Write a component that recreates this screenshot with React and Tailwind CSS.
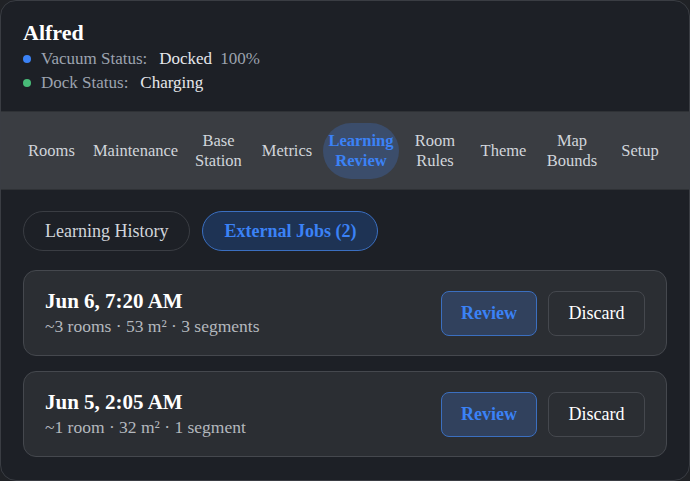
import React, { useState } from "react";

const navItems = [
  { label: ["Rooms"] },
  { label: ["Maintenance"] },
  { label: ["Base", "Station"] },
  { label: ["Metrics"] },
  { label: ["Learning", "Review"], active: true },
  { label: ["Room", "Rules"] },
  { label: ["Theme"] },
  { label: ["Map", "Bounds"] },
  { label: ["Setup"] },
];

const jobs = [
  { id: 1, when: "Jun 6, 7:20 AM", meta: "~3 rooms · 53 m² · 3 segments" },
  { id: 2, when: "Jun 5, 2:05 AM", meta: "~1 room · 32 m² · 1 segment" },
];

const App = () => {
  const [tab, setTab] = useState("external");

  return (
    <div className="w-[690px] h-[481px] bg-[#202226] font-['Liberation_Serif',serif]">
      <div className="h-full rounded-[16px] border border-[#3a3d43] bg-[#1d2026] overflow-hidden">
        {/* Header */}
        <div className="px-[22px] pt-[19px] h-[110px]">
          <h1 className="text-[22px] font-bold text-white leading-[26px]">Alfred</h1>
          <div className="mt-[1px] flex items-center text-[17px] leading-[24px]">
            <span className="w-[8px] h-[8px] rounded-full bg-[#3b82f6] mr-[10px]" />
            <span className="text-[#9ca3af]">Vacuum Status:</span>
            <span className="ml-[12px] text-[#e5e7eb]">Docked</span>
            <span className="ml-[8px] text-[#9ca3af]">100%</span>
          </div>
          <div className="flex items-center text-[17px] leading-[24px]">
            <span className="w-[8px] h-[8px] rounded-full bg-[#48bb78] mr-[10px]" />
            <span className="text-[#9ca3af]">Dock Status:</span>
            <span className="ml-[12px] text-[#e5e7eb]">Charging</span>
          </div>
        </div>

        {/* Nav */}
        <div className="h-[79px] bg-[#3a3d42] border-y border-[#2f3236] pl-[8px] grid grid-cols-[85px_83px_83px_54px_94px_54px_83px_54px_82px] items-center">
          {navItems.map((item) => (
            <div key={item.label.join(" ")} className="flex justify-center">
              <button
                className={`px-[5px] py-[8px] rounded-full text-[16.5px] leading-[20px] text-center whitespace-nowrap ${
                  item.active ? "bg-[#3b4d6b] text-[#3b82f6] font-bold" : "text-[#d1d5db]"
                }`}
              >
                {item.label.map((l, i) => (
                  <span key={i} className="block">
                    {l}
                  </span>
                ))}
              </button>
            </div>
          ))}
        </div>

        {/* Tabs */}
        <div className="px-[22px] pt-[21px] flex gap-[12px]">
          <button
            onClick={() => setTab("history")}
            className={`h-[40px] px-[21px] rounded-full border text-[18px] ${
              tab === "history"
                ? "border-[#3b6fc0] bg-[#1e3354] text-[#3b82f6] font-bold"
                : "border-[#3a3d43] text-[#d1d5db]"
            }`}
          >
            Learning History
          </button>
          <button
            onClick={() => setTab("external")}
            className={`h-[40px] px-[21px] rounded-full border text-[18px] ${
              tab === "external"
                ? "border-[#3b6fc0] bg-[#1e3354] text-[#3b82f6] font-bold"
                : "border-[#3a3d43] text-[#d1d5db]"
            }`}
          >
            External Jobs (2)
          </button>
        </div>

        {/* Jobs */}
        <div className="px-[22px] pt-[19px] flex flex-col gap-[15px]">
          {jobs.map((job) => (
            <div
              key={job.id}
              className="h-[86px] rounded-[13px] border border-[#45484e] bg-[#2b2e33] px-[21px] flex items-center justify-between"
            >
              <div>
                <p className="text-[21px] font-bold text-white leading-[25px]">{job.when}</p>
                <p className="text-[17.5px] text-[#b4b8be] leading-[23px] mt-[1px]">{job.meta}</p>
              </div>
              <div className="flex gap-[11px]">
                <button className="w-[96px] h-[45px] rounded-[8px] border border-[#3b6fc0] bg-[#31415d] text-[18px] font-bold text-[#3b82f6]">
                  Review
                </button>
                <button className="w-[97px] h-[45px] rounded-[8px] border border-[#45484e] bg-[#2b2e33] text-[18px] text-white">
                  Discard
                </button>
              </div>
            </div>
          ))}
        </div>
      </div>
    </div>
  );
};

export default App;
